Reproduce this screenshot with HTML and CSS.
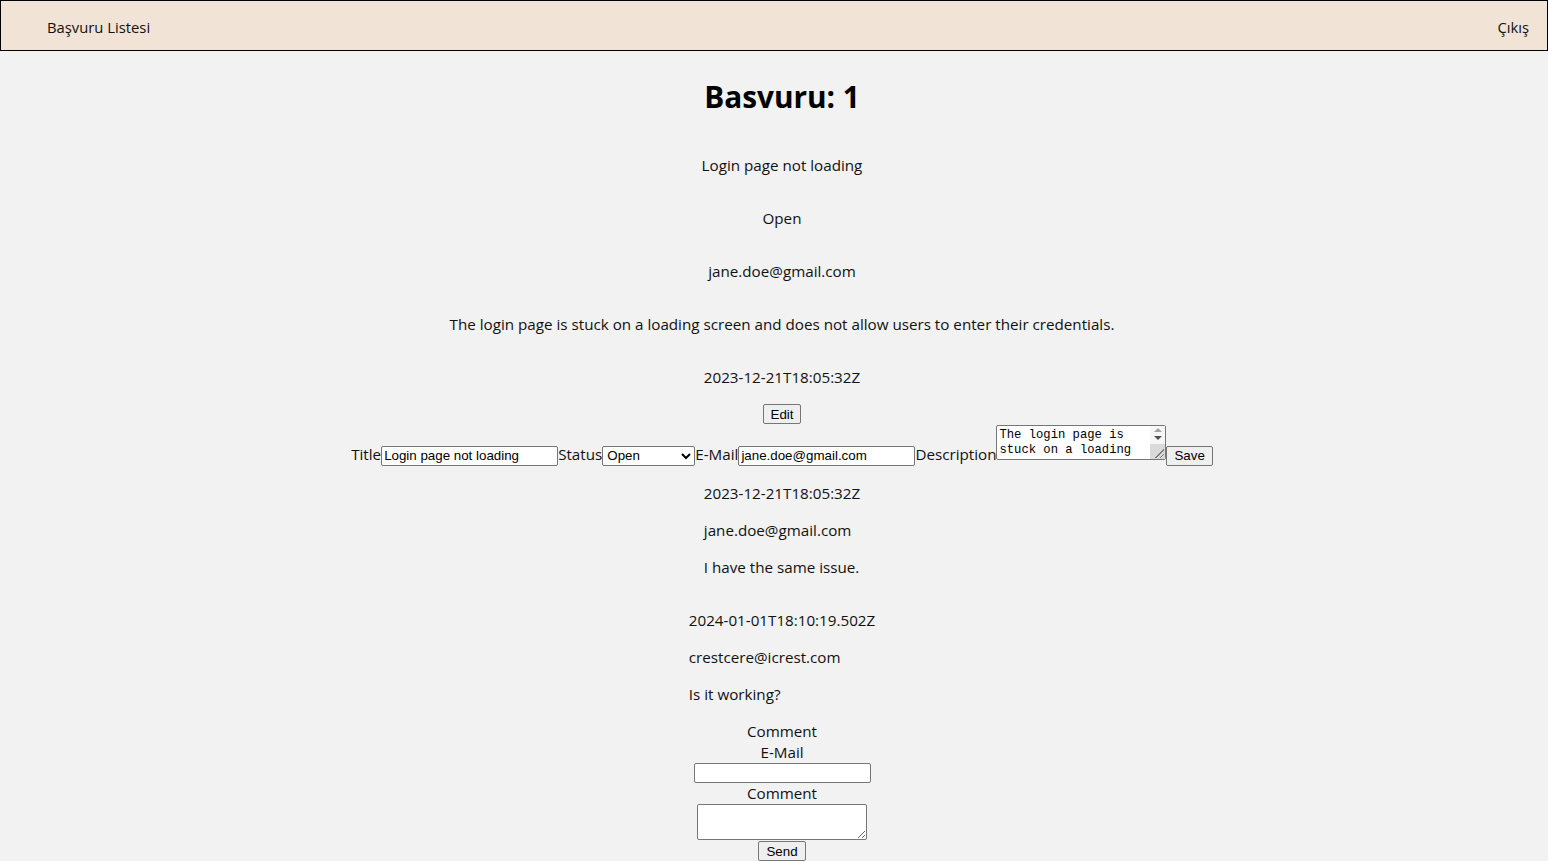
FILE: index.html
```html
<!DOCTYPE html>
<html lang="tr">
<head>
<meta charset="utf-8">
<title>Basvuru: 1</title>
<link rel="stylesheet" href="styles.css">
</head>
<body>
<header class="navbar">
  <a class="nav-link" href="#">Başvuru Listesi</a>
  <a class="nav-link" href="#">Çıkış</a>
</header>
<main class="page">
  <h1 class="title">Basvuru: 1</h1>
  <p class="field">Login page not loading</p>
  <p class="field">Open</p>
  <p class="field">jane.doe@gmail.com</p>
  <p class="field">The login page is stuck on a loading screen and does not allow users to enter their credentials.</p>
  <p class="field">2023-12-21T18:05:32Z</p>
  <button class="btn" type="button">Edit</button>
  <form class="edit-row">
    <label>Title</label><input class="inp" type="text" value="Login page not loading"><label>Status</label><select class="sel"><option>Open</option><option>Closed</option></select><label>E-Mail</label><input class="inp" type="text" value="jane.doe@gmail.com"><label>Description</label><span class="ta-wrap"><textarea class="ta ta-desc">The login page is stuck on a loading screen and does not allow users to enter their credentials.</textarea><span class="fake-sb" aria-hidden="true"><span class="sb-up"></span><span class="sb-down"></span><span class="sb-thumb"></span></span></span><button class="btn" type="button">Save</button>
  </form>
  <div class="comment">
    <p>2023-12-21T18:05:32Z</p>
    <p>jane.doe@gmail.com</p>
    <p>I have the same issue.</p>
  </div>
  <div class="comment">
    <p>2024-01-01T18:10:19.502Z</p>
    <p>crestcere@icrest.com</p>
    <p>Is it working?</p>
  </div>
  <form class="comment-form">
    <div class="cf-title">Comment</div>
    <label class="cf-label">E-Mail</label>
    <input class="inp cf-input" type="text">
    <label class="cf-label">Comment</label>
    <textarea class="ta cf-ta"></textarea>
    <button class="btn" type="button">Send</button>
  </form>
</main>
</body>
</html>
```
FILE: styles.css
```css
html, body {
  margin: 0;
  padding: 0;
  background: #f2f2f2;
}
body {
  font-family: "Open Sans", "Noto Sans", sans-serif;
  font-size: 15.2px;
  line-height: 21px;
  color: #111;
}
.navbar {
  display: flex;
  justify-content: space-between;
  align-items: center;
  height: 49px;
  border: 1px solid #000;
  background: #f2e3d7;
  padding: 0 18px 0 46px;
}
.nav-link {
  color: #111;
  text-decoration: none;
  font-size: 14.8px;
  padding-top: 4px;
}
.page {
  display: flex;
  flex-direction: column;
  align-items: center;
  padding-top: 3px;
  padding-left: 16px;
}
.title {
  font-size: 29.8px;
  line-height: 42.6px;
  font-weight: 700;
  margin: 22.44px 0 20.44px;
  color: #000;
}
.field {
  margin: 16px 0;
}
.btn {
  font-family: "Liberation Sans", Arial, sans-serif;
  font-size: 13.333px;
  margin: 0;
  padding: 1px 7px;
  height: 20px;
  border: 1px solid #767676;
  border-radius: 2px;
  background: #efefef;
  color: #000;
}
.edit-row {
  margin: 0;
  padding-top: 1px;
  height: 42px;
  white-space: nowrap;
}
.inp {
  font-family: "Liberation Sans", Arial, sans-serif;
  font-size: 13.333px;
  width: 177px;
  height: 20px;
  box-sizing: border-box;
  padding: 1px 2px;
  border: 1px solid #767676;
  border-radius: 2px;
  background: #fff;
  margin: 0;
}
.sel {
  font-family: "Liberation Sans", Arial, sans-serif;
  font-size: 13.333px;
  width: 93px;
  height: 20px;
  box-sizing: border-box;
  border: 1px solid #767676;
  border-radius: 2px;
  background: #fff;
  margin: 0;
}
.ta {
  font-family: "Liberation Mono", monospace;
  font-size: 12.2px;
  line-height: 15px;
  box-sizing: border-box;
  border: 1px solid #767676;
  border-radius: 2px;
  background: #fff;
  padding: 2px;
  margin: 0;
}
.ta-wrap {
  position: relative;
  display: inline-block;
}
.ta-desc {
  width: 170px;
  height: 35px;
  padding-right: 17px;
  vertical-align: baseline;
  overflow: hidden;
}
.fake-sb {
  position: absolute;
  top: 1px;
  right: 1px;
  width: 15px;
  height: 33px;
  background: #f7f7f7;
  display: flex;
  flex-direction: column;
  align-items: center;
  pointer-events: none;
}
.sb-up {
  width: 0;
  height: 0;
  margin-top: 2px;
  border-left: 4px solid transparent;
  border-right: 4px solid transparent;
  border-bottom: 4px solid #a3a3a3;
}
.sb-down {
  width: 0;
  height: 0;
  margin-top: 4px;
  border-left: 4px solid transparent;
  border-right: 4px solid transparent;
  border-top: 4px solid #505050;
}
.sb-thumb {
  align-self: stretch;
  flex: 1;
  margin-top: 4px;
  background-color: #dadada;
  background-image: linear-gradient(135deg, transparent 50%, #7a7a7a 50% 57%, transparent 57% 75%, #7a7a7a 75% 82%, transparent 82%);
  background-size: 9px 9px;
  background-repeat: no-repeat;
  background-position: right 1px bottom 1px;
}
.comment {
  display: flex;
  flex-direction: column;
}
.comment p {
  margin: 0;
  padding: 16px 0 0;
}
.comment p:last-child {
  padding-bottom: 16px;
}
.comment-form {
  display: flex;
  flex-direction: column;
  align-items: center;
}
.cf-ta {
  width: 170px;
  height: 36px;
}
.cf-ta + .btn {
  margin-top: 1px;
}
```
